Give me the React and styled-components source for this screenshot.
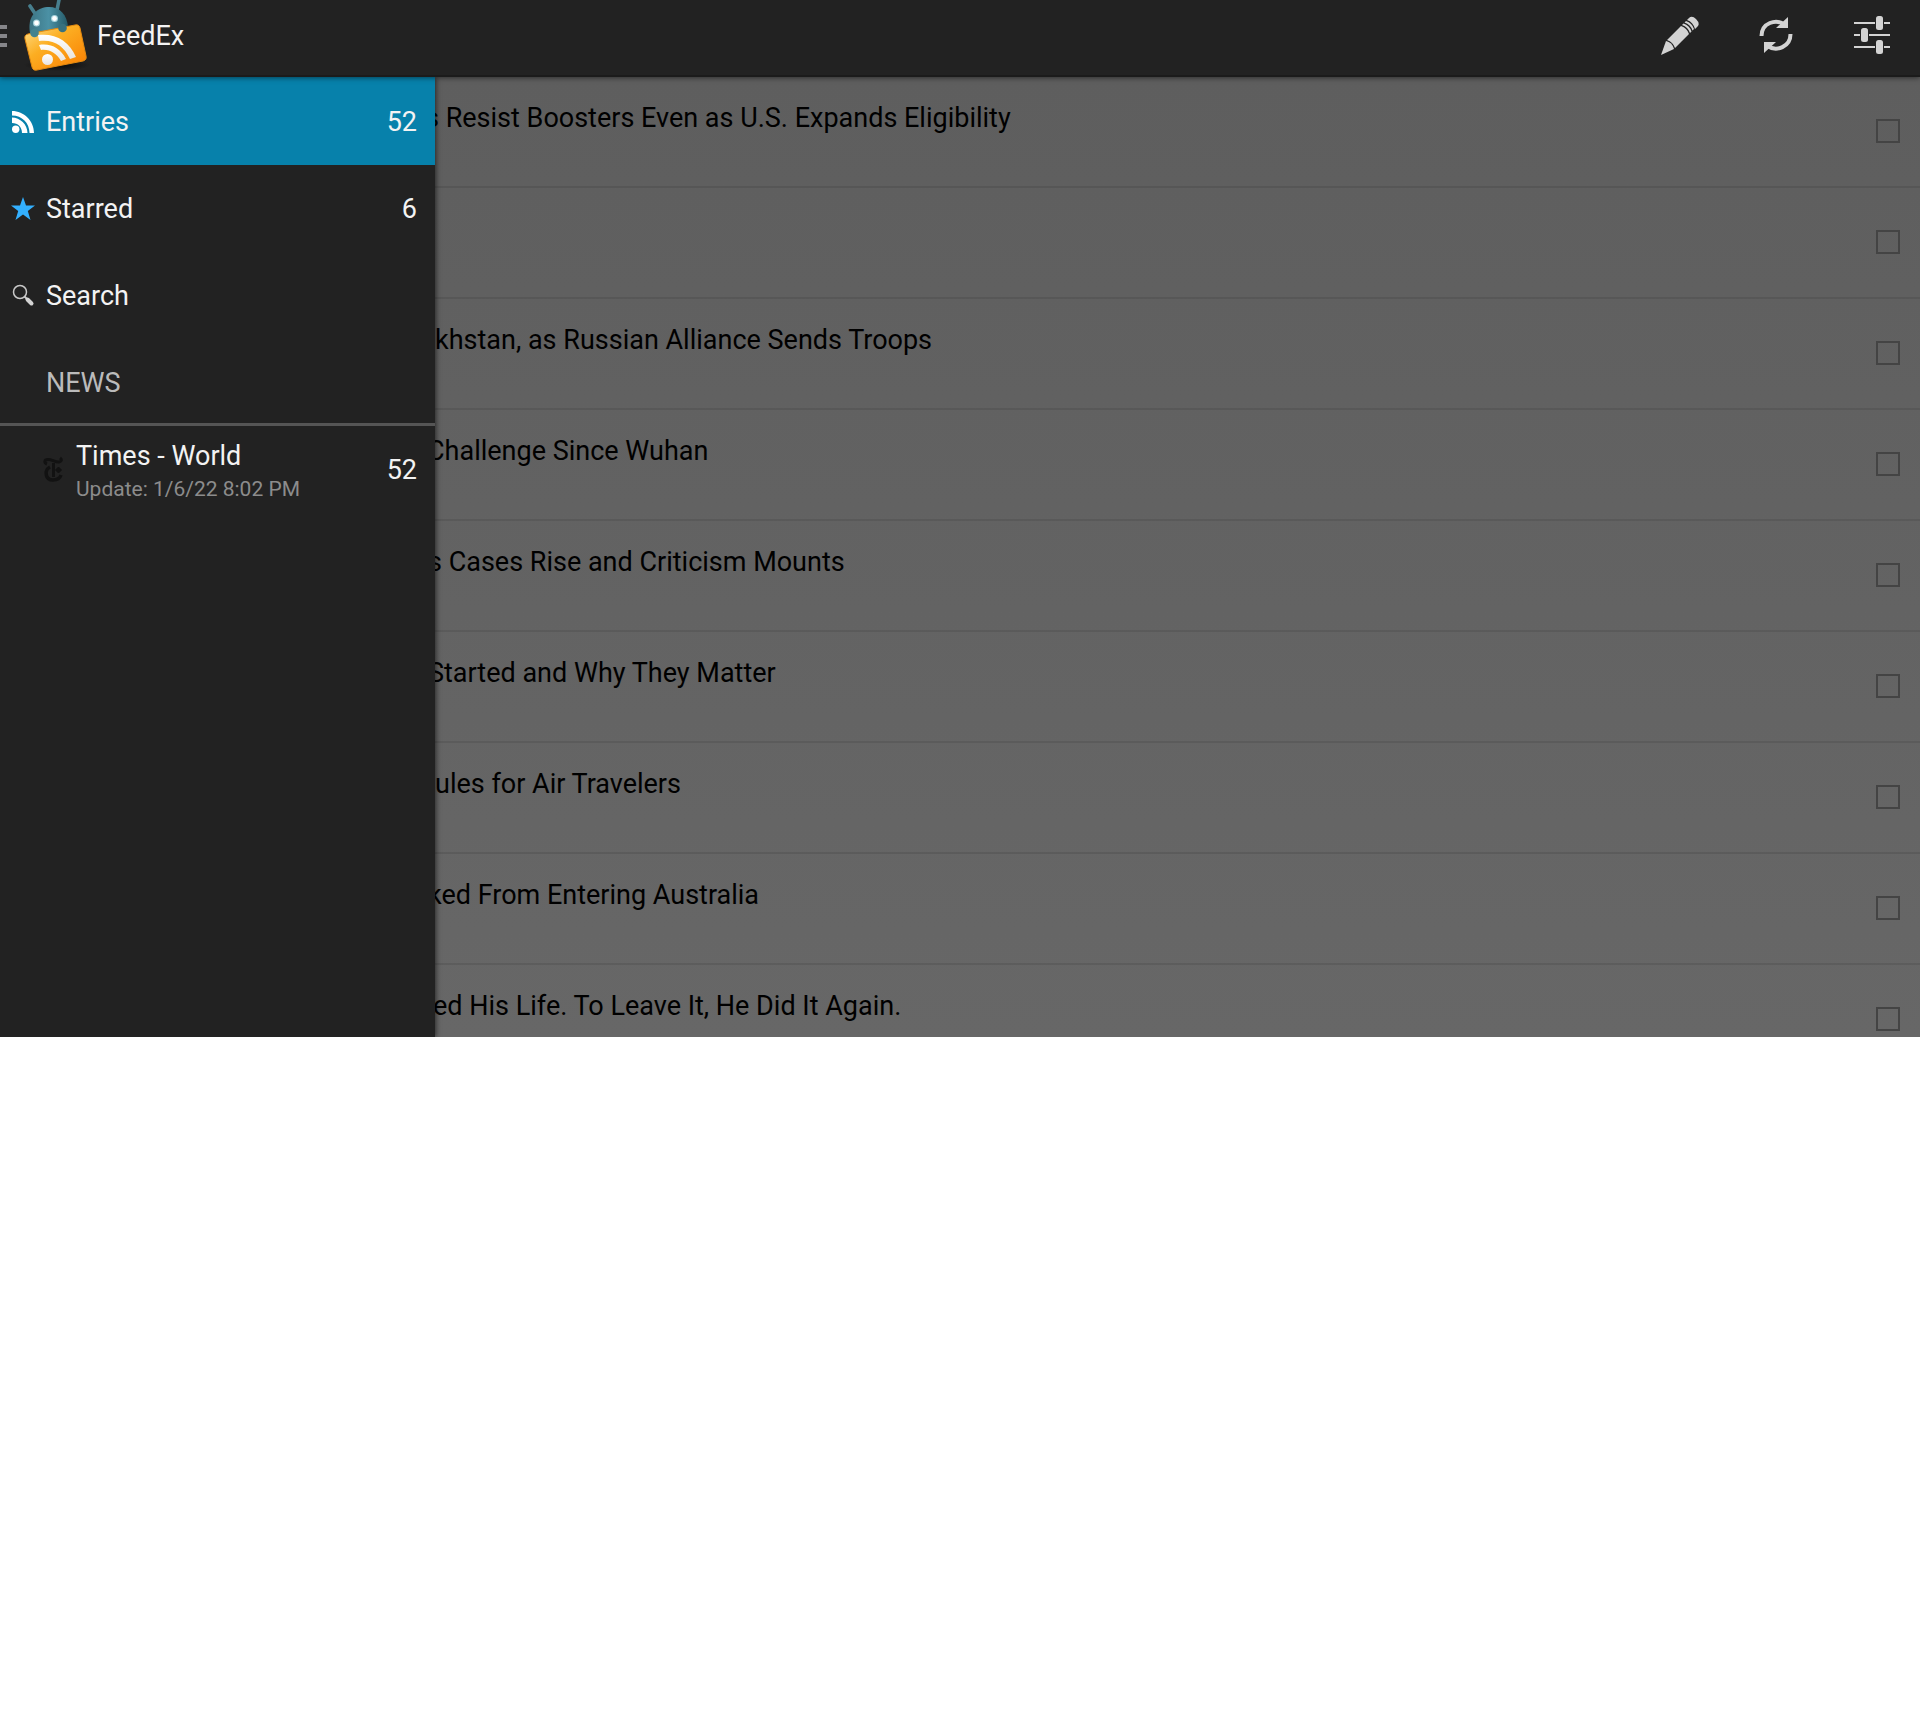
import React from "react";
import styled, { createGlobalStyle } from "styled-components";

const GlobalStyle = createGlobalStyle`
  * { box-sizing: border-box; }
  body {
    margin: 0;
    background: #fff;
    font-family: Roboto, "Liberation Sans", sans-serif;
    font-size: 27px;
    line-height: 32px;
  }
  button, input { font: inherit; }
  ul { list-style: none; margin: 0; padding: 0; }
`;

const Screen = styled.div`
  display: flex;
  flex-direction: column;
`;

const ActionBar = styled.header`
  position: relative;
  z-index: 2;
  display: flex;
  align-items: center;
  justify-content: space-between;
  height: 77px;
  padding-bottom: 4px;
  background: #222;
  border-bottom: 2px solid #1b1b1b;
  box-shadow: 0 1px 5px rgba(0, 0, 0, 0.5);
`;

const HomeButton = styled.button`
  display: flex;
  align-items: center;
  gap: 7px;
  height: 71px;
  padding: 0;
  border: 0;
  background: none;
  color: #f3f3f3;
`;

const HomeIcons = styled.span`
  display: flex;
  height: 71px;
`;

const Actions = styled.div`
  display: flex;
`;

const ActionButton = styled.button`
  display: flex;
  align-items: center;
  justify-content: center;
  width: 96px;
  height: 71px;
  padding: 0;
  border: 0;
  background: none;
`;

const Body = styled.div`
  display: flex;
  height: 960px;
  overflow: hidden;
  background: linear-gradient(#5e5e5e, #676767);
`;

const Drawer = styled.nav`
  position: relative;
  z-index: 1;
  flex: 0 0 435px;
  background: #222;
  box-shadow: 1px 0 5px rgba(0, 0, 0, 0.6);
`;

const DrawerItem = styled.button`
  display: flex;
  align-items: center;
  gap: 11px;
  width: 100%;
  height: ${(p) => (p.$selected ? 88 : 87)}px;
  padding: ${(p) => (p.$selected ? 2 : 0)}px 18px 0 ${(p) => (p.$nested ? 41 : 11)}px;
  border: 0;
  background: ${(p) => (p.$selected ? "#0781ab" : "none")};
  color: #f3f3f3;
  text-align: left;
`;

const DrawerLabel = styled.span`
  display: flex;
  flex: 1;
  flex-direction: column;
`;

const FeedLabel = styled(DrawerLabel)`
  gap: 1px;
  padding-top: 5px;
`;

const Detail = styled.small`
  font-size: 21px;
  color: #8c8c8c;
`;

const GroupHeading = styled.h2`
  display: flex;
  align-items: center;
  height: 87px;
  margin: 0;
  padding: 3px 0 0 46px;
  border-bottom: 3px solid #555;
  color: #bbb;
  font-size: 27px;
  font-weight: 400;
`;

const Entries = styled.ul`
  flex: 1;
  min-width: 0;
`;

const Entry = styled.li`
  display: flex;
  align-items: center;
  justify-content: space-between;
  height: 111px;
  padding: 0 20px 2px 0;
  border-bottom: 2px solid rgba(0, 0, 0, 0.09);
`;

const EntryTitle = styled.label`
  flex: 1;
  align-self: flex-start;
  margin-left: -${(p) => p.$covered}px;
  padding-top: 25px;
  color: #000;
  white-space: nowrap;
`;

const Tick = styled.input`
  appearance: none;
  width: 24px;
  height: 24px;
  margin: 0;
  border: 2px solid #444;
  background: transparent;
`;

const MenuBars = () => (
  <svg width="24" height="71" viewBox="0 0 24 71" aria-hidden="true">
    <path d="M0 25h7v4H0zM0 34h7v4H0zM0 43h7v4H0z" fill="#858589" />
  </svg>
);

const AppLogo = () => (
  <svg width="66" height="71" viewBox="24 0 66 71" aria-hidden="true">
    <defs>
      <linearGradient id="folder" x1="0" y1="0" x2="1" y2="1">
        <stop offset="0" stopColor="#ffe08c" />
        <stop offset="0.4" stopColor="#fcae22" />
        <stop offset="1" stopColor="#fa7c00" />
      </linearGradient>
      <linearGradient id="robot" x1="0" y1="0" x2="1" y2="0">
        <stop offset="0" stopColor="#3c7483" />
        <stop offset="0.5" stopColor="#4b91a5" />
        <stop offset="1" stopColor="#255a68" />
      </linearGradient>
      <linearGradient id="wave" x1="0" y1="0" x2="0" y2="1">
        <stop offset="0" stopColor="#fff" />
        <stop offset="1" stopColor="#e8e4e0" />
      </linearGradient>
      <radialGradient id="shade">
        <stop offset="0" stopColor="#080808" />
        <stop offset="1" stopColor="#222" />
      </radialGradient>
    </defs>
    <ellipse cx="57" cy="65" rx="33" ry="6" fill="url(#shade)" />
    <path d="M30 6l6 9M59 0l-2 10" stroke="#477e8d" strokeWidth="3.6" strokeLinecap="round" />
    <path d="M30 33C27 17 36 8 47 7c12-1 20 7 21 20v10H31z" fill="url(#robot)" />
    <circle cx="36.500" cy="23" r="3.500" fill="#a7d3dc" />
    <circle cx="54.500" cy="18.500" r="3.500" fill="#a7d3dc" />
    <circle cx="36.500" cy="23" r="2.400" fill="#fff" />
    <circle cx="54.500" cy="18.500" r="2.400" fill="#fff" />
    <path
      d="M28 34l47-9q4-1 5 3l6 28q1 4-3 5l-46 9q-4 1-5-3l-7-28q-1-4 3-5z"
      fill="url(#folder)"
      stroke="#e48a10"
      strokeWidth="1"
    />
    <circle cx="34.500" cy="33" r="4.300" fill="#41828f" />
    <circle cx="62.500" cy="28" r="4.300" fill="#38717f" />
    <circle cx="47.500" cy="59.500" r="5.500" fill="url(#wave)" />
    <path d="M39 45c12-2 21 3 27 14l-5 2c-5-8-11-12-20-11z" fill="url(#wave)" />
    <path d="M38 35c18-2 31 6 38 22l-6 2C64 46 54 39 39 41z" fill="url(#wave)" />
  </svg>
);

const PencilIcon = () => (
  <svg width="40" height="40" viewBox="0 0 40 40" fill="#d3d3d3" aria-hidden="true">
    <path d="M1 39l5-14q6 1 8 8z" />
    <path d="M7 24L21 10q6 2 8 8L15 32q-2-6-8-8z" />
    <path d="M22 9l1.500-1.500q6 2 8 8L30 17q-2-6-8-8zM24.500 6.500L26 5q6 2 8 8l-1.500 1.500q-2-6-8-8z" />
    <path d="M27 4l2-2q3-3 7 1t2 7l-3 3q-2-7-8-9z" />
  </svg>
);

const RefreshIcon = () => (
  <svg width="36" height="38" viewBox="0 0 36 38" aria-hidden="true">
    <path d="M3.500 19C3.500 6 18 1 27 8M32.500 17c0 13-14 18-23 12" fill="none" stroke="#d3d3d3" strokeWidth="4" />
    <path d="M30 0v11H18zM6 36V25h12z" fill="#d3d3d3" />
  </svg>
);

const TuneIcon = () => (
  <svg width="38" height="40" viewBox="0 0 38 40" fill="#d3d3d3" aria-hidden="true">
    <path d="M1 6h21v2H1zM31 6h6v2h-6zM1 18h6v2H1zM16 18h21v2H16zM1 30h21v2H1zM31 30h6v2h-6z" />
    <rect x="23" y="0" width="7" height="14" rx="2.500" />
    <rect x="8" y="12" width="7" height="14" rx="2.500" />
    <rect x="23" y="24" width="7" height="14" rx="2.500" />
  </svg>
);

const FeedIcon = () => (
  <svg width="24" height="24" viewBox="0 0 24 24" fill="#fff" aria-hidden="true">
    <circle cx="4.700" cy="19.300" r="3.700" />
    <path d="M1 7.500c8 0 15.500 7 15.500 15.500h-5.500C11 17 7 13 1 13z" />
    <path d="M1 1c12 0 22 10 22 22h-4.500C18.500 13 11 5.500 1 5.500z" />
  </svg>
);

const StarIcon = () => (
  <svg width="24" height="24" viewBox="0 0 24 24" aria-hidden="true">
    <path d="M12 0l3 8.500h9l-7.200 5.500L19.500 23 12 17.600 4.500 23l2.700-9L0 8.500h9z" fill="#33b0ff" />
  </svg>
);

const SearchIcon = () => (
  <svg width="24" height="24" viewBox="0 0 24 24" aria-hidden="true">
    <circle cx="9" cy="8" r="6.500" fill="none" stroke="#c9c9c9" strokeWidth="1.500" />
    <path d="M13.500 12.500l3 3" stroke="#c9c9c9" strokeWidth="2" />
    <path d="M16.500 15.500l4 4" stroke="#d3d3d3" strokeWidth="4" strokeLinecap="round" />
  </svg>
);

const TimesIcon = () => (
  <svg width="24" height="28" viewBox="0 0 24 28" fill="none" stroke="#121212" aria-hidden="true">
    <path d="M6 8C3 7 3 3.500 7 3.500s8 3 11 2.500 3-2.500 1-4" strokeWidth="3" />
    <path d="M12.500 7v14" strokeWidth="3" />
    <path d="M9 11c-6 3-5 13 3 13 4 0 7-2 8-5" strokeWidth="3.500" />
    <path d="M17.500 11l3 3-3 3-3-3z" fill="#121212" strokeWidth="1" />
  </svg>
);

const shortcuts = [
  { label: "Entries", count: 52, Icon: FeedIcon, selected: true },
  { label: "Starred", count: 6, Icon: StarIcon },
  { label: "Search", Icon: SearchIcon },
];

// `covered` is how far a title reaches under the open drawer.
const entries = [
  { title: "s Resist Boosters Even as U.S. Expands Eligibility", covered: 10 },
  { title: "", covered: 0 },
  { title: "khstan, as Russian Alliance Sends Troops", covered: 0 },
  { title: "Challenge Since Wuhan", covered: 8 },
  { title: "s Cases Rise and Criticism Mounts", covered: 7 },
  { title: "Started and Why They Matter", covered: 7 },
  { title: "ules for Air Travelers", covered: 0 },
  { title: "ked From Entering Australia", covered: 7 },
  { title: "ed His Life. To Leave It, He Did It Again.", covered: 2 },
];

export default function App() {
  return (
    <Screen>
      <GlobalStyle />
      <ActionBar>
        <HomeButton>
          <HomeIcons>
            <MenuBars />
            <AppLogo />
          </HomeIcons>
          FeedEx
        </HomeButton>
        <Actions>
          <ActionButton aria-label="Edit"><PencilIcon /></ActionButton>
          <ActionButton aria-label="Refresh"><RefreshIcon /></ActionButton>
          <ActionButton aria-label="Settings"><TuneIcon /></ActionButton>
        </Actions>
      </ActionBar>
      <Body>
        <Drawer>
          {shortcuts.map(({ label, count, Icon, selected }) => (
            <DrawerItem key={label} $selected={selected}>
              <Icon />
              <DrawerLabel>{label}</DrawerLabel>
              {count}
            </DrawerItem>
          ))}
          <GroupHeading>NEWS</GroupHeading>
          <DrawerItem $nested>
            <TimesIcon />
            <FeedLabel>
              Times - World
              <Detail>Update: 1/6/22 8:02 PM</Detail>
            </FeedLabel>
            52
          </DrawerItem>
        </Drawer>
        <Entries>
          {entries.map(({ title, covered }, i) => (
            <Entry key={i}>
              <EntryTitle htmlFor={`read-${i}`} $covered={covered}>{title}</EntryTitle>
              <Tick type="checkbox" id={`read-${i}`} aria-label={title || "Entry"} />
            </Entry>
          ))}
        </Entries>
      </Body>
    </Screen>
  );
}
